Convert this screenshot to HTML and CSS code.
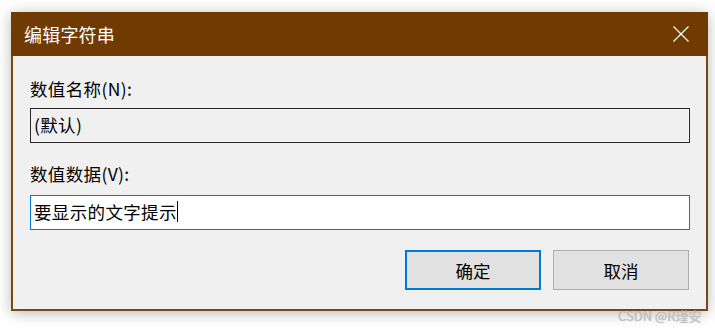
FILE: index.html
```html
<!DOCTYPE html>
<html lang="zh">
<head>
<meta charset="utf-8">
<link rel="stylesheet" href="styles.css">
</head>
<body>
<div class="window">
  <div class="titlebar">
    <span class="title">编辑字符串</span>
    <svg class="close" width="16" height="16" viewBox="0 0 16 16"><path d="M0.5 0.5 L15.5 15.5 M15.5 0.5 L0.5 15.5" stroke="#fff" stroke-width="1.2" fill="none"/></svg>
  </div>
  <div class="content">
    <div class="label">数值名称(N):</div>
    <div class="field readonly">(默认)</div>
    <div class="label label2">数值数据(V):</div>
    <div class="field edit">要显示的文字提示<span class="caret"></span></div>
    <div class="buttons">
      <div class="btn primary">确定</div>
      <div class="btn">取消</div>
    </div>
  </div>
</div>
<div class="watermark">CSDN @R瑾安</div>
</body>
</html>
```
FILE: styles.css
```css
html, body { margin: 0; padding: 0; }
body {
  width: 715px; height: 331px; overflow: hidden;
  background: #ffffff;
  font-family: "Noto Sans CJK SC", "Noto Sans", sans-serif;
  position: relative;
}
.window {
  margin: 12px 0 0 11px;
  width: 697px; height: 299px;
  box-sizing: border-box;
  border: 2px solid #7b4714;
  border-top: none;
  background: #f0f0f0;
  box-shadow: 0 2px 14px rgba(0,0,0,0.28);
  display: flex; flex-direction: column;
}
.titlebar {
  height: 44px;
  margin: 0 -2px;
  background: #703a03;
  display: flex; align-items: center; justify-content: space-between;
  padding: 0 19px 0 13px;
  color: #fff;
}
.title { font-size: 18px; line-height: 20px; letter-spacing: 0.2px; }
.close { display: block; }
.content {
  padding: 23px 16px 0 17px;
  display: flex; flex-direction: column;
}
.label { font-size: 17.5px; line-height: 20px; color: #000; letter-spacing: 0.35px; }
.label2 { margin-top: 21px; }
.field {
  margin-top: 9px;
  height: 35px; box-sizing: border-box;
  font-size: 17.5px; line-height: 20px;
  letter-spacing: 0.35px;
  padding: 6px 0 0 3px;
  display: flex; align-items: flex-start;
  color: #000;
}
.readonly { border: 1px solid #262626; box-shadow: inset -1px -1px 0 #fafafa; background: #f0f0f0; }
.edit { margin-top: 11px; border: 1px solid #0078d7; background: #fff; }
.caret { display: inline-block; width: 1px; height: 21px; background: #000; margin: -1px 0 0 0; }
.buttons { display: flex; justify-content: flex-end; gap: 12px; margin-top: 20px; padding-right: 1px; }
.btn {
  width: 136px; height: 40px; box-sizing: border-box;
  background: #e1e1e1; border: 1px solid #adadad;
  display: flex; align-items: center; justify-content: center;
  font-size: 17.5px; color: #000;
}
.btn.primary { border: 2px solid #0078d7; }
.watermark {
  position: absolute; left: 618px; top: 308px;
  font-family: "Noto Sans CJK SC", "Liberation Sans", sans-serif;
  font-size: 13px; line-height: 16px;
  color: #c4c4c4;
  text-shadow: 0 0 1px rgba(120,120,120,0.5);
}
```
